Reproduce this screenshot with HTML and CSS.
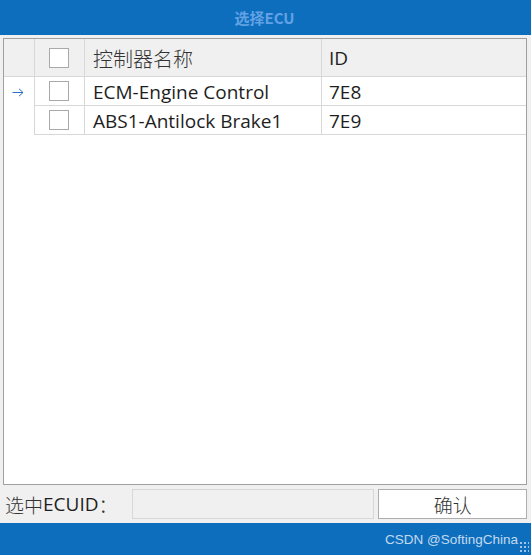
FILE: index.html
```html
<!DOCTYPE html>
<html lang="zh">
<head>
<meta charset="utf-8">
<title>选择ECU</title>
<link rel="stylesheet" href="styles.css">
</head>
<body>
<div class="window">
  <header class="titlebar">选择ECU</header>
  <div class="content">
    <div class="grid">
      <div class="row head">
        <div class="cell rh"></div>
        <div class="cell chk"><span class="box"></span></div>
        <div class="cell name cjk">控制器名称</div>
        <div class="cell id">ID</div>
      </div>
      <div class="row">
        <div class="cell rh"><svg class="arrow" width="12" height="9" viewBox="0 0 12 9"><path d="M0.5 4.5H11M7 0.8L11 4.5L7 8.2" fill="none" stroke="#2a6fc7" stroke-width="1"/></svg></div>
        <div class="cell chk"><span class="box"></span></div>
        <div class="cell name">ECM-Engine Control</div>
        <div class="cell id">7E8</div>
      </div>
      <div class="row">
        <div class="cell rh"></div>
        <div class="cell chk"><span class="box"></span></div>
        <div class="cell name">ABS1-Antilock Brake1</div>
        <div class="cell id">7E9</div>
      </div>
    </div>
    <div class="bottom">
      <div class="label"><span class="cjk">选中</span>ECUID<span class="cjk">：</span></div>
      <div class="input"></div>
      <button class="btn cjk">确认</button>
    </div>
  </div>
  <footer class="statusbar">
    <span class="mark">CSDN @SoftingChina</span>
    <span class="grip"></span>
  </footer>
</div>
</body>
</html>
```
FILE: styles.css
```css
* { box-sizing: border-box; }
html, body { margin: 0; padding: 0; }
body {
  width: 531px;
  height: 555px;
  background: #f0f0f0;
  font-family: "Open Sans", "Noto Sans", "Noto Sans CJK SC", sans-serif;
  overflow: hidden;
}
.window {
  display: flex;
  flex-direction: column;
  height: 555px;
}
.titlebar {
  height: 36px;
  background: #0e6ebe;
  color: #62a2e4;
  font-family: "Noto Sans CJK SC", sans-serif;
  font-weight: 700;
  font-size: 15px;
  display: flex;
  align-items: center;
  justify-content: center;
  padding-right: 2px;
}
.content {
  flex: 1;
  display: flex;
  flex-direction: column;
  padding: 3px 4px 0 3px;
}
.grid {
  height: 447px;
  border: 1px solid #a0a0a0;
  background: #ffffff;
}
.row {
  display: grid;
  grid-template-columns: 31px 50px 237px 1fr;
  height: 29px;
}
.row.head {
  height: 38px;
  background: #f0f0f0;
  border-bottom: 1px solid #d8d8d8;
}
.row:not(.head) .cell:not(.rh) { border-bottom: 1px solid #d8d8d8; }
.row:not(.head) .cell.name,
.row:not(.head) .cell.id { padding-top: 2px; }
.head .cell.name,
.head .cell.id { padding-top: 1px; }
.cell {
  border-right: 1px solid #d8d8d8;
  display: flex;
  align-items: center;
  font-size: 19px;
  color: #1e1e1e;
  padding-left: 8px;
  overflow: hidden;
  white-space: nowrap;
}
.cell.id { border-right: none; padding-left: 7px; }
.cell.rh { padding-left: 0; justify-content: center; }
.cell.chk { padding-left: 0; justify-content: center; }
.box {
  width: 20px;
  height: 20px;
  border: 1px solid #a9a9a9;
  background: #fff;
  display: block;
  margin-left: -1px;
}
.cjk {
  font-family: "Noto Sans CJK SC", sans-serif;
  font-weight: 300;
}
.cell.name.cjk { font-size: 20px; color: #333; }
.head .cell.id { color: #222; }
.arrow {
  display: block;
  margin-left: -2px;
  margin-top: 2px;
}
.bottom {
  display: flex;
  align-items: center;
  height: 38px;
  padding-top: 4px;
  padding-bottom: 4px;
}
.label {
  font-size: 19px;
  color: #1e1e1e;
  width: 126px;
  padding-left: 2px;
  white-space: nowrap;
  display: flex;
  align-items: center;
}
.label .cjk { color: #333; font-size: 19px; }
.input {
  width: 243px;
  height: 30px;
  border: 1px solid #d8d8d8;
  background: #f0f0f0;
  margin-left: 3px;
}
.btn {
  margin-left: 4px;
  width: 149px;
  height: 30px;
  border: 1px solid #adadad;
  background: #fff;
  font-size: 19px;
  color: #333;
  padding: 0;
}
.statusbar {
  height: 32px;
  background: #0e6ebe;
  display: flex;
  align-items: center;
  justify-content: flex-end;
  position: relative;
  padding-right: 13px;
}
.mark {
  color: rgba(255,255,255,0.75);
  font-family: "Liberation Sans", sans-serif;
  font-size: 13.5px;
  padding-top: 1px;
}
.grip {
  position: absolute;
  right: 2px;
  bottom: 2px;
  width: 10px;
  height: 12px;
  background-image: radial-gradient(circle, rgba(255,255,255,0.6) 1px, transparent 1.2px);
  background-size: 4px 4px;
}
```
